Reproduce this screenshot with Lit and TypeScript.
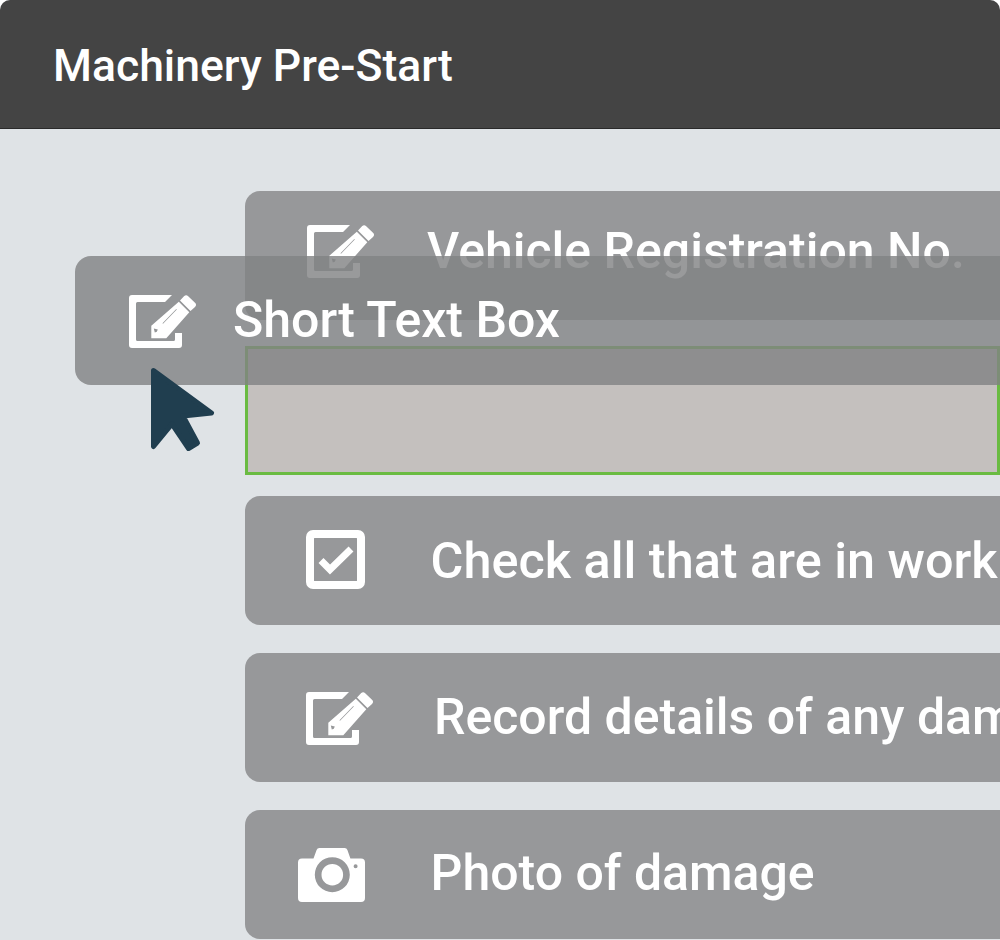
import { LitElement, html, css, svg } from "lit";
import { customElement } from "lit/decorators.js";

const editIcon = svg`<svg class="edit" viewBox="0 0 67 53" width="67" height="53">
  <path fill="#fff" d="M43 0H3A3 3 0 0 0 0 3v47A3 3 0 0 0 3 53h47a3 3 0 0 0 3-3V38H46v6.500a1.500 1.500 0 0 1-1.500 1.500H8.500a1.500 1.500 0 0 1-1.500-1.500V8.500A1.500 1.500 0 0 1 8.500 7H36z"/>
  <path fill="#fff" fill-rule="evenodd" d="M22.300 30.700 49.800 6.700 60.300 17.200 37.300 43.300H22.300zM24.800 33.500l1 4 2-.8 1-2.200zM33.500 28.200l.5.500 13.800-14.200-.5-.5z"/>
  <path fill="#fff" d="M51 5.500 55 1.200a3 3 0 0 1 4.200 0L66 7.700a3 3 0 0 1 0 4.200L61.500 16z"/>
</svg>`;

const checkIcon = svg`<svg class="check" viewBox="0 0 59 59" width="59" height="59">
  <path fill="#fff" fill-rule="evenodd" d="M7 0h45a7 7 0 0 1 7 7v45a7 7 0 0 1-7 7H7a7 7 0 0 1-7-7V7a7 7 0 0 1 7-7zM8.500 8a.5.500 0 0 0-.5.500v42a.5.500 0 0 0 .5.500h42a.5.500 0 0 0 .5-.500v-42a.5.500 0 0 0-.5-.500z"/>
  <path fill="none" stroke="#fff" stroke-width="7" d="M15 30.500l9 9L45 19"/>
</svg>`;

const cameraIcon = svg`<svg class="camera" viewBox="0 0 67 54" width="67" height="54">
  <path fill="#fff" fill-rule="evenodd" d="M4 10.500h11.500L18.600 2A3 3 0 0 1 21.400 0h25.200a3 3 0 0 1 2.800 2l3 8.500H63a4 4 0 0 1 4 4V50a4 4 0 0 1-4 4H4a4 4 0 0 1-4-4V14.500a4 4 0 0 1 4-4zM34.300 9.200a17.500 17.500 0 1 0 0 35 17.500 17.500 0 0 0 0-35zM57.600 16.300a2 2 0 1 0 0 4 2 2 0 0 0 0-4z"/>
  <circle cx="34.300" cy="26.700" r="10.800" fill="#fff"/>
</svg>`;

interface Row {
  cls: string;
  icon: unknown;
  label: string;
}

const ROWS_BELOW: Row[] = [
  { cls: "r-check", icon: checkIcon, label: "Check all that are in working order" },
  { cls: "r-record", icon: editIcon, label: "Record details of any damage" },
  { cls: "r-photo", icon: cameraIcon, label: "Photo of damage" },
];

@customElement("app-root")
export class AppRoot extends LitElement {
  static styles = css`
    :host {
      display: block;
      width: 1000px;
      height: 940px;
      overflow: hidden;
      font-family: Roboto, "Liberation Sans", sans-serif;
      background: #fff;
    }
    .page {
      position: relative;
      width: 1000px;
      height: 940px;
      overflow: hidden;
      background: #dfe3e6;
      border-radius: 10px 10px 0 0;
      display: flex;
      flex-direction: column;
    }
    .header {
      flex: none;
      box-sizing: border-box;
      height: 129px;
      padding: 4px 0 0 53px;
      display: flex;
      align-items: center;
      background: #444444;
      border-bottom: 1px solid #2a2a2a;
      color: #fff;
      font-size: 44.5px;
      font-weight: 500;
    }
    .list {
      flex: 1;
      min-width: 0;
      padding: 62px 0 0 245px;
      display: flex;
      flex-direction: column;
      overflow: hidden;
    }
    .row {
      flex: none;
      box-sizing: border-box;
      height: 129px;
      width: 755px;
      display: flex;
      align-items: center;
      background: #97989a;
      border-radius: 15px 0 0 15px;
      color: #fff;
      font-size: 50px;
      font-weight: 500;
      white-space: nowrap;
      overflow: hidden;
    }
    .row svg {
      flex: none;
      display: block;
    }
    .edit {
      margin-top: 2px;
    }
    .check {
      margin-bottom: 2px;
    }
    .r-vehicle {
      padding: 0 0 10px 62px;
    }
    .r-vehicle .label {
      margin-left: 53px;
    }
    .r-check {
      margin-top: 21px;
      padding-left: 61px;
    }
    .r-check .label {
      margin-left: 65.5px;
      font-size: 50.4px;
    }
    .r-record {
      margin-top: 28px;
      padding-left: 61px;
    }
    .r-record .label {
      margin: 0 0 1px 61px;
    }
    .r-photo {
      margin-top: 28px;
      padding-left: 53px;
    }
    .r-photo .label {
      margin: 0 0 4px 65.5px;
    }
    .drop {
      flex: none;
      box-sizing: border-box;
      height: 129px;
      margin-top: 26px;
      background: #c4c0be;
      border: 3px solid #6abb42;
    }
    .ghost {
      position: absolute;
      left: 75px;
      top: 256px;
      right: 0;
      height: 129px;
      box-sizing: border-box;
      padding-left: 54px;
      display: flex;
      align-items: center;
      gap: 37px;
      background: rgba(129, 130, 132, 0.81);
      border-radius: 16px 0 0 16px;
      color: #fff;
      font-size: 50px;
      font-weight: 500;
      white-space: nowrap;
    }
    .ghost span {
      margin-bottom: 1px;
    }
    .cursor {
      position: absolute;
      left: 150px;
      top: 366px;
    }
  `;

  render() {
    return html`
      <div class="page">
        <div class="header"><span>Machinery Pre-Start</span></div>
        <div class="list">
          <div class="row r-vehicle">${editIcon}<span class="label">Vehicle Registration No.</span></div>
          <div class="drop"></div>
          ${ROWS_BELOW.map(
            (r) => html`<div class="row ${r.cls}">${r.icon}<span class="label">${r.label}</span></div>`
          )}
        </div>
        <div class="ghost">${editIcon}<span>Short Text Box</span></div>
        <svg class="cursor" viewBox="0 0 66 88" width="66" height="88">
          <path fill="#203e4f" stroke="#203e4f" stroke-width="5" stroke-linejoin="round"
            d="M3.500 4.500 61.500 47 33 50 47.500 77 38.500 82.500 22 58 3.500 80.500z"/>
        </svg>
      </div>
    `;
  }
}
